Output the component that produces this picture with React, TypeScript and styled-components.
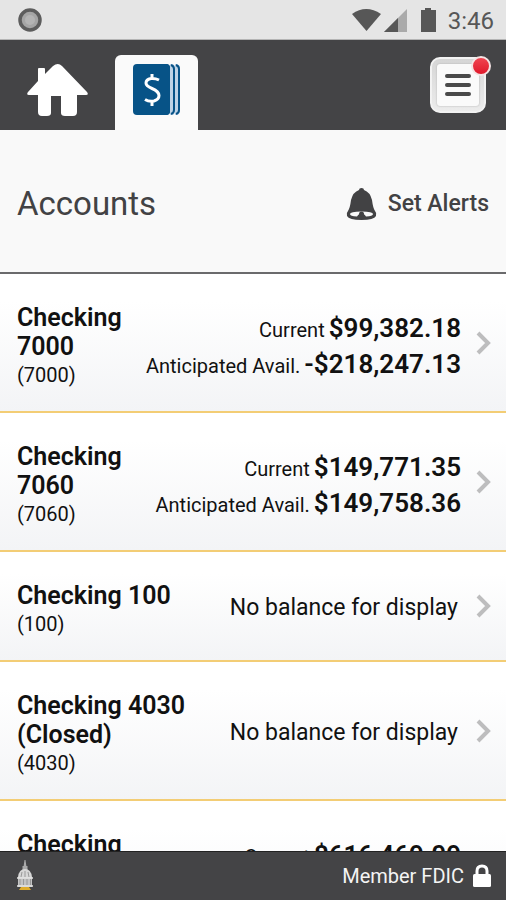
import React from "react";
import styled, { createGlobalStyle } from "styled-components";

const GlobalStyle = createGlobalStyle`
  * { box-sizing: border-box; }
  body { margin: 0; background: #fff; color: #111; font-family: Roboto, "Open Sans", sans-serif; }
  h1, h2, p, ul { margin: 0; padding: 0; }
  button { border: 0; padding: 0; background: none; color: inherit; font: inherit; cursor: pointer; }
  svg { display: block; flex: none; }
`;

const Screen = styled.div`
  height: 100vh;
  display: flex;
  flex-direction: column;
  overflow: hidden;
`;

const StatusBar = styled.div`
  flex: none;
  height: 40px;
  padding: 0 12px 0 18px;
  display: flex;
  align-items: center;
  justify-content: space-between;
  background: #e5e5e5;
  border-bottom: 1px solid #b4b4b4;
  color: #575757;
`;

const StatusIcons = styled.div`
  display: flex;
  align-items: center;
`;

const Clock = styled.time`
  margin-left: 10px;
  padding-top: 2px;
  font-size: 24px;
  line-height: 28px;
`;

const Header = styled.header`
  flex: none;
  height: 90px;
  padding-right: 20px;
  display: flex;
  align-items: flex-end;
  justify-content: space-between;
  background: #444446;
`;

const Tabs = styled.nav`
  display: flex;
`;

const Tab = styled.button<{ $active?: boolean }>`
  width: ${(p) => (p.$active ? 83 : 115)}px;
  height: 75px;
  padding-top: 8px;
  display: flex;
  justify-content: center;
  align-items: flex-start;
  border-radius: 6px 6px 0 0;
  background: ${(p) => (p.$active ? "#fafafa" : "transparent")};
`;

const MenuButton = styled.button`
  position: relative;
  width: 56px;
  height: 56px;
  margin-bottom: 17px;
  display: grid;
  place-items: center;
  border: 2px solid #f2f2f2;
  border-radius: 10px;
  background: linear-gradient(#d6d6d6, #ececec);
`;

const MenuFace = styled.span`
  width: 42px;
  height: 42px;
  display: grid;
  place-items: center;
  border-radius: 3px;
  background: #fafafa;
  box-shadow: 0 0 2px #aaa;
`;

const Badge = styled.span`
  position: absolute;
  top: -3px;
  right: -7px;
  width: 20px;
  height: 20px;
  border: 2px solid #f4e4e4;
  border-radius: 50%;
  background: linear-gradient(#f04450, #e0182a);
`;

const TitleBar = styled.section`
  flex: none;
  height: 144px;
  padding: 6px 17px 0;
  display: flex;
  align-items: center;
  justify-content: space-between;
  background: #f9f9f9;
  border-bottom: 2px solid #6a6a6c;
  color: #424244;
`;

const Title = styled.h1`
  font-size: 33px;
  line-height: 40px;
  font-weight: 400;
`;

const AlertsButton = styled.button`
  display: flex;
  align-items: center;
  gap: 11px;
  font-size: 23px;
  line-height: 32px;
  font-weight: 500;
`;

const AccountList = styled.ul`
  flex: 1;
  min-height: 0;
  overflow: hidden;
  list-style: none;
`;

const AccountItem = styled.li`
  border-bottom: 2px solid #f3cd75;
`;

const AccountRow = styled.button`
  width: 100%;
  padding: 0 14px 0 17px;
  display: grid;
  grid-template-columns: minmax(0, 1fr) auto 16px;
  align-items: center;
  text-align: left;
  background: linear-gradient(#fff 20%, #f3f4f6);
`;

const AccountName = styled.span`
  padding: 29px 0 21px;
  display: flex;
  flex-direction: column;
  line-height: 29px;
`;

const Name = styled.strong`
  font-size: 25px;
  font-weight: 600;
`;

const Number = styled.span`
  font-size: 20px;
`;

const Balances = styled.span`
  padding-top: 6px;
  display: flex;
  flex-direction: column;
  align-items: flex-end;
  margin-right: 15px;
`;

const Balance = styled.span`
  display: flex;
  align-items: baseline;
  gap: 4px;
  height: 36px;
  font-size: 20px;
  line-height: 36px;
  white-space: nowrap;
`;

const Amount = styled.strong`
  font-size: 26px;
  font-weight: 600;
`;

const NoBalance = styled.span`
  padding-top: 4px;
  margin-right: 18px;
  font-size: 23px;
  line-height: 30px;
`;

const Footer = styled.footer`
  flex: none;
  height: 49px;
  padding: 0 15px;
  display: flex;
  align-items: center;
  justify-content: space-between;
  background: #444446;
  border-top: 1px solid #222;
  color: #f4f4f4;
`;

const Member = styled.span`
  display: flex;
  align-items: center;
  gap: 9px;
  font-size: 20px;
  line-height: 24px;
`;

const RecordIcon = () => (
  <svg width="24" height="24" viewBox="0 0 24 24">
    <circle cx="12" cy="12" r="10" fill="#a5a5a5" stroke="#5d5d5d" strokeWidth="3.5" />
    <circle cx="12" cy="12" r="5" fill="#b4b4b4" />
  </svg>
);

const SignalIcons = () => (
  <svg width="86" height="26" viewBox="0 0 86 26">
    <path d="M0 7Q14-3 29 7L14.500 24Z" fill="#575757" />
    <path d="M55 2V25H32Z" fill="#aaa" />
    <path d="M46 11V25H32Z" fill="#575757" />
    <path d="M73 1h6v2h5v22H69V3h4Z" fill="#575757" />
  </svg>
);

const HomeIcon = () => (
  <svg width="61" height="54" viewBox="0 0 61 54">
    <path
      d="M11 18V6q0-1 1-1h5q1 0 1 1v5l8-8q5-4 9 0l25 26q2 3-1 3h-9v17q0 4-4 4h-8q-4 0-4-3V33H24v17q0 3-4 3h-5q-4 0-4-4V32H2q-3 0-1-3Z"
      fill="#fff"
    />
  </svg>
);

const MoneyIcon = () => (
  <svg width="48" height="54" viewBox="0 0 48 54">
    <rect x="0" y="1" width="37" height="51" rx="4" fill="#075387" />
    <path d="M37 1h3q2 1 2 4v43q0 3-2 4h-3M42 1h2q3 1 3 4v43q0 3-3 4h-2" fill="#bfd3e6" />
    <path d="M38 2q3 1 3 4v41q0 3-3 4M43 2q3 1 3 4v41q0 3-3 4" fill="none" stroke="#075387" strokeWidth="2" />
    <path d="M33 1q4 0 4 4v43q0 4-4 4" fill="#075387" />
    <path
      d="M26 17q-4-2-8-1.500-5 1-5 4.500 0 3 6 5.500 7 3 7 7 0 4-5 5.500-5 1-9-1.500M19 11v5M19 38v5"
      fill="none"
      stroke="#fff"
      strokeWidth="3"
    />
  </svg>
);

const MenuIcon = () => (
  <svg width="28" height="24" viewBox="0 0 28 24" stroke="#4a4a4a" strokeWidth="4" strokeLinecap="round">
    <path d="M3 3h22M3 12h22M3 21h22" />
  </svg>
);

const BellIcon = () => (
  <svg width="31" height="34" viewBox="0 0 31 34">
    <path
      d="M13 3q0-2 2.500-2T18 3q6 2 8 10 1 8 3 11 2 2 1 5-2 4-14.500 4T1 29q-1-3 1-5 2-3 3-11Q7 5 13 3Z"
      fill="#424244"
    />
    <path d="M4 27q0-2.500 11.500-2.500T27 27q0 2-7 2.500-1-2-2.500-2.500h-4q-1.500.5-2.500 2.500-7-.5-7-2.500Z" fill="#f9f9f9" />
    <circle cx="15.500" cy="27" r="2.500" fill="#424244" />
  </svg>
);

const Chevron = () => (
  <svg width="16" height="24" viewBox="0 0 16 24" fill="none" stroke="#bdbdbe" strokeWidth="4">
    <path d="M2 2l10 10L2 22" />
  </svg>
);

const DomeIcon = () => (
  <svg width="20" height="34" viewBox="0 0 20 34">
    <path d="M9.500 1h1l1 7h-3ZM7.500 7h5v4h-5Z" fill="#aaa" />
    <path d="M3 18q1-8 7-8t7 8v2H3Z" fill="#d7d7d7" />
    <path d="M3 19h14v9H3Z" fill="#c3c3c3" />
    <path d="M2 19h16M2 27h16" stroke="#e4e4e4" strokeWidth="1.500" />
    <path d="M5 20v6M8.500 20v6M12 20v6M15.500 20v6M7 13l-1 5M13 13l1 5M10 12v6" stroke="#999" />
    <path d="M6 28h8l2 3H4Z" fill="#dfac2c" />
  </svg>
);

const LockIcon = () => (
  <svg width="18" height="24" viewBox="0 0 18 24">
    <path d="M4 11V7q0-5 5-5t5 5v4" fill="none" stroke="#fff" strokeWidth="3" />
    <rect x="0" y="10" width="18" height="13" rx="1.500" fill="#fff" />
  </svg>
);

type Account = { name: string; number: string; current?: string; available?: string };

const accounts: Account[] = [
  { name: "Checking 7000", number: "(7000)", current: "$99,382.18", available: "-$218,247.13" },
  { name: "Checking 7060", number: "(7060)", current: "$149,771.35", available: "$149,758.36" },
  { name: "Checking 100", number: "(100)" },
  { name: "Checking 4030 (Closed)", number: "(4030)" },
  { name: "Checking 7090", number: "(7090)", current: "$616,469.09", available: "$616,469.09" },
];

export default function App() {
  return (
    <Screen>
      <GlobalStyle />
      <StatusBar>
        <RecordIcon />
        <StatusIcons>
          <SignalIcons />
          <Clock>3:46</Clock>
        </StatusIcons>
      </StatusBar>
      <Header>
        <Tabs>
          <Tab aria-label="Home"><HomeIcon /></Tab>
          <Tab $active aria-label="Accounts"><MoneyIcon /></Tab>
        </Tabs>
        <MenuButton aria-label="Menu">
          <MenuFace><MenuIcon /></MenuFace>
          <Badge />
        </MenuButton>
      </Header>
      <TitleBar>
        <Title>Accounts</Title>
        <AlertsButton><BellIcon />Set Alerts</AlertsButton>
      </TitleBar>
      <AccountList>
        {accounts.map((a) => (
          <AccountItem key={a.number}>
            <AccountRow>
              <AccountName>
                <Name>{a.name}</Name>
                <Number>{a.number}</Number>
              </AccountName>
              {a.current ? (
                <Balances>
                  <Balance>Current <Amount>{a.current}</Amount></Balance>
                  <Balance>Anticipated Avail. <Amount>{a.available}</Amount></Balance>
                </Balances>
              ) : (
                <NoBalance>No balance for display</NoBalance>
              )}
              <Chevron />
            </AccountRow>
          </AccountItem>
        ))}
      </AccountList>
      <Footer>
        <DomeIcon />
        <Member>Member FDIC <LockIcon /></Member>
      </Footer>
    </Screen>
  );
}
